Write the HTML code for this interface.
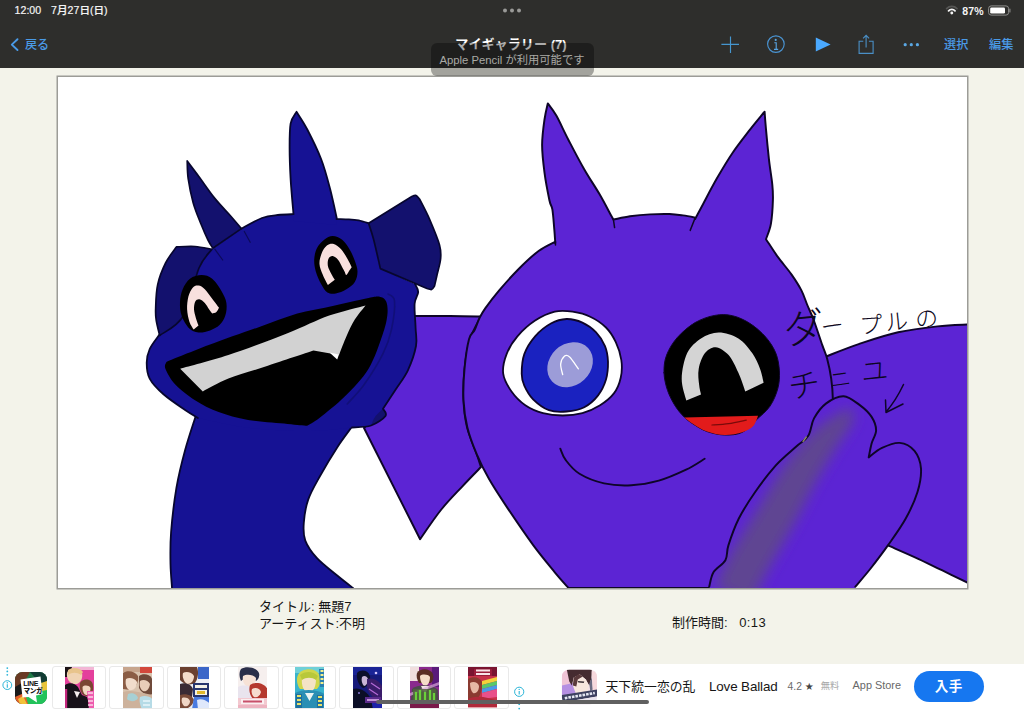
<!DOCTYPE html>
<html lang="ja">
<head>
<meta charset="utf-8">
<title>マイギャラリー</title>
<style>
*{box-sizing:border-box;margin:0;padding:0}
html,body{width:1024px;height:711px;overflow:hidden}
body{position:relative;background:#f3f3ea;font-family:"Liberation Sans","Noto Sans CJK JP",sans-serif;color:#111}
.abs{position:absolute}
#topbar{left:0;top:0;width:1024px;height:68px;background:#2e2e2c}
#status-l{left:14.6px;top:2.9px;font-size:10.6px;line-height:14px;color:#f4f4f4;white-space:nowrap;-webkit-text-stroke:.18px #f4f4f4}
#status-l span{margin-left:10px;font-weight:500}
#dots{left:502px;top:7.7px;width:20px;height:5px}
#pct{left:962.2px;top:3.9px;font-size:10.5px;line-height:14px;color:#f4f4f4;font-weight:bold;letter-spacing:.25px}
#back{left:25px;top:36.6px;font-size:12.1px;line-height:16px;color:#4a9ae6;font-weight:500}
#title{left:411px;top:37.3px;width:200px;text-align:center;font-size:13.1px;line-height:16px;color:#fff;font-weight:bold;white-space:nowrap}
#toast{left:430.5px;top:43px;width:163px;height:32.5px;border-radius:6px;background:rgba(0,0,0,.33);color:#a9a9a5;font-size:11.3px;line-height:14px;padding-top:9.5px;text-align:center;white-space:nowrap}
.navtxt{top:37.3px;font-size:12.2px;line-height:16px;color:#4a9ae6;white-space:nowrap;font-weight:500}
#canvas{left:57.7px;top:77.1px;width:909.3px;height:511.2px;background:#fff;box-shadow:0 0 0 1.5px #9c9c97;overflow:hidden}
.meta{font-size:13px;line-height:16.5px;color:#161616;white-space:nowrap}
#adbar{left:0;top:663.5px;width:1024px;height:48px;background:#fff}
.card{top:2.6px;width:54.5px;height:43.2px;border:1px solid #e9e9e9;border-radius:3px;background:#fff;overflow:hidden}
.card svg{position:absolute;left:12.3px;top:-.6px}
#homebar{left:376px;top:700px;width:272.5px;height:4.4px;border-radius:2.2px;background:#606060}
</style>
</head>
<body>
<div id="topbar" class="abs"></div>
<div id="status-l" class="abs">12:00<span>7月27日(日)</span></div>
<svg id="dots" class="abs" viewBox="0 0 20 5"><circle cx="3" cy="2.5" r="2" fill="#9a9a98"/><circle cx="10" cy="2.5" r="2" fill="#9a9a98"/><circle cx="17" cy="2.5" r="2" fill="#9a9a98"/></svg>

<svg class="abs" style="left:0;top:0" width="1024" height="68" viewBox="0 0 1024 68" fill="none">
<!-- back chevron -->
<path d="M17.5,39.2 L11.8,44.6 L17.5,50" stroke="#4a9ae6" stroke-width="1.9" stroke-linecap="round" stroke-linejoin="round"/>
<!-- plus -->
<path d="M721.4,44.3 H739 M730.5,36.4 V53.1" stroke="#4596cf" stroke-width="1.15"/>
<!-- info -->
<circle cx="775.9" cy="44.1" r="8.3" stroke="#4a94d2" stroke-width="1.15"/>
<circle cx="775.7" cy="39.9" r="1.05" fill="#58a6e6"/>
<path d="M774.3,42.7 H776.2 V49.2 M774,49.4 H778.2" stroke="#58a6e6" stroke-width="1.1"/>
<!-- play -->
<path d="M815.8,37.6 L830.6,44.5 L815.8,51.5 Z" fill="#4aa9ff"/>
<!-- share -->
<path d="M863.3,41.3 H859.1 V53.4 H873.1 V41.3 H868.9" stroke="#4a8fc6" stroke-width="1.1"/>
<path d="M866.1,47.6 V35.4 M863.1,38.4 L866.1,35.3 L869.1,38.4" stroke="#4a8fc6" stroke-width="1.1"/>
<!-- more dots -->
<circle cx="905.2" cy="44.7" r="1.6" fill="#5aa8e4"/><circle cx="911.3" cy="44.7" r="1.6" fill="#5aa8e4"/><circle cx="917.4" cy="44.7" r="1.6" fill="#5aa8e4"/>
<!-- wifi -->
<path d="M946.6,8.6 A7.2,7.2 0 0 1 957,8.6" stroke="#565654" stroke-width="1.7" stroke-linecap="round"/>
<path d="M948.6,10.8 A4.4,4.4 0 0 1 955,10.8" stroke="#f4f4f4" stroke-width="1.9" stroke-linecap="round"/>
<circle cx="951.8" cy="13" r="1.45" fill="#f4f4f4"/>
<!-- battery -->
<rect x="988.6" y="5.9" width="20" height="9.2" rx="2.6" stroke="#8e8e8c" stroke-width="1"/>
<rect x="990.2" y="7.4" width="14.8" height="6.2" rx="1.3" fill="#fff"/>
<path d="M1009.9,9 V12" stroke="#8e8e8c" stroke-width="1.1" stroke-linecap="round"/>
</svg>
<div id="pct" class="abs">87%</div>
<div id="back" class="abs">戻る</div>
<div id="title" class="abs">マイギャラリー (7)</div>
<div class="abs navtxt" style="left:944px">選択</div>
<div class="abs navtxt" style="left:989px">編集</div>

<div id="canvas" class="abs">
<svg id="art" viewBox="57 77 910 511" width="910" height="511" style="position:absolute;left:-.7px;top:-.1px">
<defs><filter id="blur" x="-40%" y="-40%" width="180%" height="180%"><feGaussianBlur stdDeviation="6.5"/></filter>
<clipPath id="armclip"><path d="M709.2,586.7 C709.9,584.3 710.9,576.4 713.6,572.0 C716.3,567.5 723.0,564.6 725.4,560.2 C727.9,555.7 726.2,552.3 728.4,545.4 C730.6,538.5 734.3,527.7 738.7,518.8 C743.2,509.9 748.8,501.1 755.0,492.2 C761.1,483.4 768.8,473.3 775.6,465.6 C782.5,458.0 790.9,451.4 796.3,446.5 C801.7,441.5 805.2,440.8 808.1,436.1 C811.1,431.4 811.1,423.8 814.0,418.4 C817.0,413.0 820.9,407.3 825.9,403.6 C830.8,399.9 837.9,396.0 843.6,396.2 C849.2,396.5 855.1,401.7 859.8,405.1 C864.5,408.5 868.9,412.7 871.6,416.9 C874.3,421.1 876.1,425.8 876.1,430.2 C876.1,434.6 872.9,439.0 871.6,443.5 C870.4,448.0 869.2,455.1 868.7,457.4 C870.9,455.8 876.8,450.3 882.0,447.9 C887.1,445.5 894.3,442.4 899.7,442.9 C905.1,443.4 910.9,446.6 914.5,450.9 C918.0,455.2 920.5,461.7 921.0,468.6 C921.4,475.5 920.0,483.9 917.4,492.2 C914.8,500.6 910.5,509.9 905.6,518.8 C900.7,527.7 893.8,537.0 887.9,545.4 C882.0,553.8 875.6,562.1 870.2,569.0 C864.7,575.9 857.8,583.8 855.4,586.7 L855.0,590.0 L709.0,590.0 Z"/></clipPath></defs>
<g stroke="#0e0528" stroke-width="1.95" stroke-linejoin="round" stroke-linecap="round" fill="none">
<path d="M400.0,316.0 C408.3,316.0 436.5,315.9 450.0,316.0 C463.5,316.1 475.8,316.4 481.0,316.5 C479.2,320.2 472.8,330.2 470.0,339.0 C467.2,347.8 465.6,358.8 464.5,369.0 C463.4,379.2 463.1,390.3 463.5,400.0 C463.9,409.7 464.8,417.8 467.0,427.0 C469.2,436.2 474.7,448.3 477.0,455.0 C479.3,461.7 480.3,465.0 481.0,467.0 C477.9,470.2 469.0,479.2 462.4,486.3 C455.8,493.4 448.4,500.7 441.3,509.5 C434.2,518.3 423.6,534.2 420.1,539.2 L364.0,428.0 L370.0,421.0 C371.3,417.5 374.3,408.5 378.0,400.0 C381.7,391.5 388.3,384.0 392.0,370.0 C395.7,356.0 398.7,325.0 400.0,316.0 Z" fill="#5c24d4"/>
<path d="M800.0,400.0 L826.0,356.5 C831.5,354.4 846.7,348.1 858.7,344.1 C870.7,340.1 885.0,335.2 898.1,332.3 C911.2,329.4 925.9,327.7 937.5,326.4 C949.1,325.1 962.9,324.8 968.0,324.5 L968.0,582.8 C963.6,580.7 950.7,574.5 941.9,570.2 C933.1,566.0 924.0,561.4 915.0,557.3 C906.0,553.2 892.5,547.4 888.0,545.4 L800.0,560.0 Z" fill="#5c24d4"/>
<path d="M555.3,243.0 C555.1,240.7 554.8,235.0 554.3,229.4 C553.8,223.8 553.2,214.6 552.4,209.7 C551.6,204.8 550.7,206.4 549.4,200.2 C548.1,194.0 545.7,181.9 544.5,172.7 C543.3,163.5 542.1,154.0 542.1,145.1 C542.1,136.2 543.5,126.5 544.5,119.5 C545.5,112.5 547.2,106.1 547.8,103.4 C549.2,105.4 552.9,109.6 556.3,115.6 C559.7,121.6 563.5,130.3 568.1,139.2 C572.7,148.0 578.6,159.5 583.9,168.7 C589.1,177.9 595.0,186.4 599.6,194.3 C604.2,202.2 609.1,211.8 611.4,216.0 C613.7,220.2 613.1,218.9 613.4,219.5 C616.2,219.0 623.9,217.2 630.0,216.3 C636.1,215.5 643.4,214.8 650.0,214.4 C656.6,214.0 664.0,213.8 669.5,214.0 C675.0,214.2 678.7,214.8 683.0,215.4 C687.3,216.0 693.1,217.2 695.1,217.6 L695.1,219.0 C696.4,216.5 699.4,210.9 703.0,204.2 C706.6,197.5 711.9,187.1 716.8,178.6 C721.7,170.1 726.9,161.2 732.5,153.0 C738.1,144.8 744.9,136.3 750.2,129.4 C755.6,122.5 762.2,114.7 764.6,111.7 C764.8,114.7 765.3,121.5 766.0,129.4 C766.7,137.3 767.9,149.7 768.9,158.9 C769.9,168.1 771.6,177.6 772.3,184.5 C773.0,191.4 773.1,193.6 772.9,200.2 C772.7,206.8 772.0,217.4 770.9,223.9 C769.8,230.4 766.8,236.6 766.0,239.2 C768.0,242.1 773.5,251.0 777.8,256.9 C782.1,262.8 787.7,269.0 791.6,274.6 C795.5,280.2 798.8,285.3 801.4,290.4 C804.0,295.5 805.3,300.1 807.3,305.0 C809.3,309.9 811.0,312.8 813.5,319.5 C816.0,326.2 820.0,338.5 822.3,345.1 C824.6,351.7 825.7,353.3 827.2,358.9 C828.7,364.5 830.3,372.0 831.2,378.6 C832.1,385.2 832.7,389.7 832.8,398.3 C832.9,406.9 832.1,424.7 832.0,430.0 L832.0,588.0 L568.5,588.0 C566.2,585.4 560.7,579.5 554.8,572.3 C548.9,565.1 540.7,555.4 533.0,544.9 C525.3,534.4 515.7,520.3 508.4,509.4 C501.1,498.5 494.4,488.4 489.2,479.3 C483.9,470.2 480.5,463.4 476.9,454.7 C473.2,446.0 469.5,436.4 467.3,427.3 C465.1,418.2 464.0,409.7 463.5,400.0 C463.0,390.3 463.6,379.1 464.5,369.0 C465.4,358.9 467.3,345.7 469.0,339.2 C470.7,332.7 472.9,333.5 474.6,330.0 C476.4,326.5 477.7,321.6 479.5,318.0 C481.3,314.4 482.1,312.7 485.4,308.1 C488.7,303.5 493.6,297.0 499.2,290.4 C504.8,283.8 512.3,275.3 518.9,268.7 C525.5,262.1 532.5,255.5 538.6,251.0 C544.7,246.5 552.5,243.2 555.3,241.6 Z" fill="#5c24d4"/>
<path d="M613.4,219.5 L614.6,227.6" fill="none" stroke-width="1.5"/>
<path d="M695.1,218 L690.2,230.4" fill="none" stroke-width="1.5"/>
<path d="M555.3,241.6 L555.5,245" fill="none" stroke-width="1.5"/>
<path d="M195.4,417.0 C193.7,422.5 188.4,438.0 185.2,449.8 C182.0,461.6 178.8,474.2 176.4,487.9 C174.1,501.6 172.1,519.1 171.1,531.8 C170.1,544.5 170.3,554.6 170.5,564.0 C170.7,573.4 171.8,584.0 172.0,588.0 L353.0,588.0 C350.4,586.0 343.5,580.8 337.5,575.8 C331.5,570.8 322.4,564.1 317.0,558.2 C311.6,552.3 307.5,546.5 305.3,540.6 C303.1,534.7 303.3,529.8 303.8,523.0 C304.3,516.2 305.5,507.4 308.2,499.6 C310.9,491.8 315.0,485.0 319.9,476.2 C324.8,467.4 332.1,455.2 337.5,446.9 C342.9,438.6 349.8,429.8 352.2,426.4 L380.0,400.0 Z" fill="#161294" stroke="none"/>
<path d="M195.4,417.0 C193.7,422.5 188.4,438.0 185.2,449.8 C182.0,461.6 178.8,474.2 176.4,487.9 C174.1,501.6 172.1,519.1 171.1,531.8 C170.1,544.5 170.3,554.6 170.5,564.0 C170.7,573.4 171.8,584.0 172.0,588.0 " fill="none" stroke-width="1.8" stroke="#07062e"/>
<path d="M353.0,588.0 C350.4,586.0 343.5,580.8 337.5,575.8 C331.5,570.8 322.4,564.1 317.0,558.2 C311.6,552.3 307.5,546.5 305.3,540.6 C303.1,534.7 303.3,529.8 303.8,523.0 C304.3,516.2 305.5,507.4 308.2,499.6 C310.9,491.8 315.0,485.0 319.9,476.2 C324.8,467.4 332.1,455.2 337.5,446.9 C342.9,438.6 349.8,429.8 352.2,426.4 " fill="none" stroke-width="1.8" stroke="#07062e"/>
<path d="M241.4,228.6 C244.8,226.8 255.9,220.3 262.0,218.0 C268.1,215.7 272.6,215.6 277.8,215.0 C283.1,214.4 290.9,214.3 293.5,214.2 L336.5,219.0 C338.6,219.1 345.2,219.2 348.9,219.4 C352.6,219.6 355.4,219.8 358.7,220.4 C362.0,221.1 367.0,222.8 368.6,223.3 C369.4,225.9 371.5,231.4 373.5,239.0 C375.5,246.6 379.2,263.7 380.4,268.6 L415.0,284.0 C415.5,285.3 418.3,288.7 418.2,292.0 C418.1,295.3 415.0,298.0 414.6,304.0 C414.2,310.0 415.4,321.0 415.6,328.0 C415.8,335.0 417.3,339.0 416.0,346.0 C414.7,353.0 411.3,362.8 408.0,370.0 C404.7,377.2 400.2,382.5 396.0,389.0 C391.8,395.5 385.2,405.5 383.0,408.8 C383.4,410.0 387.5,413.2 385.5,416.0 C383.5,418.8 376.7,423.6 371.1,425.5 C365.5,427.4 355.2,427.2 352.0,427.5 C345.0,428.1 327.0,430.9 310.0,431.0 C293.0,431.1 268.7,430.2 250.0,428.0 C231.3,425.8 206.6,419.7 197.9,418.0 C195.8,416.7 190.8,413.9 185.1,410.0 C179.4,406.1 169.4,399.5 163.5,394.3 C157.6,389.1 152.5,383.9 149.7,378.6 C146.9,373.4 146.7,367.7 146.7,362.8 C146.7,357.9 147.6,353.7 149.7,349.0 C151.8,344.3 157.9,336.9 159.5,334.5 C163.5,331.4 176.7,327.1 183.3,316.0 C189.9,304.9 194.2,279.1 199.0,268.0 C203.8,256.9 209.8,252.3 211.9,249.2 L241.4,228.6 Z" fill="#161294" stroke="none"/>
<path d="M293.5,214.2 C293.0,208.3 291.2,189.5 290.6,178.7 C290.0,167.9 289.6,158.4 289.6,149.2 C289.6,140.0 289.5,129.8 290.6,123.6 C291.8,117.4 295.5,113.8 296.5,111.8 C298.3,114.8 303.2,121.6 307.3,129.5 C311.4,137.4 317.3,149.2 321.1,159.0 C324.9,168.8 327.4,178.6 330.0,188.6 C332.6,198.6 335.8,213.9 336.9,219.0 L336.0,225.0 L294.0,221.0 Z" fill="#161294" stroke="none"/>
<path d="M383.0,408.8 C383.4,410.0 387.5,413.2 385.5,416.0 C383.5,418.8 373.5,423.9 371.1,425.5 C371.8,424.1 373.0,419.8 375.0,417.0 C377.0,414.2 381.7,410.2 383.0,408.8 Z" fill="#13116e" stroke="none"/>
<path d="M176.4,246.9 C179.5,246.8 189.1,246.1 195.0,246.5 C200.9,246.9 209.1,248.8 211.9,249.2 C209.8,252.3 203.8,256.9 199.0,268.0 C194.2,279.1 189.9,304.8 183.3,316.0 C176.8,327.2 163.6,332.2 159.7,335.5 C159.1,332.9 156.9,324.6 156.2,320.0 C155.5,315.4 155.4,313.9 155.7,308.0 C155.9,302.1 156.0,292.1 157.7,284.6 C159.3,277.1 162.5,269.3 165.6,263.0 C168.7,256.7 174.6,249.6 176.4,246.9 Z" fill="#13116e" stroke-width="1.7" stroke="#07062e"/>
<path d="M368.6,223.3 L411.0,197.0 C411.8,196.7 414.4,195.1 415.8,195.4 C417.2,195.7 418.9,198.4 419.5,199.0 C421.2,202.4 426.3,211.7 429.6,219.4 C432.9,227.1 437.7,238.4 439.5,245.0 C441.3,251.6 441.0,253.7 440.6,258.7 C440.2,263.7 438.0,270.4 437.0,275.0 C436.0,279.6 434.9,284.2 434.5,286.0 C434.0,286.6 432.9,289.1 431.6,289.5 C430.4,289.9 427.8,288.7 427.0,288.5 L380.4,268.6 C379.2,263.7 375.5,246.6 373.5,239.0 C371.5,231.4 369.4,225.9 368.6,223.3 Z" fill="#13116e" stroke-width="1.7" stroke="#07062e"/>
<path d="M187.2,161.0 C187.4,163.9 187.2,171.8 188.2,178.7 C189.2,185.6 191.0,194.8 193.1,202.4 C195.2,210.0 198.5,217.7 201.0,224.0 C203.5,230.3 206.0,236.0 208.0,240.0 C210.0,244.0 212.0,246.8 212.8,248.2 L241.4,228.6 C239.6,226.5 235.0,221.0 230.6,216.0 C226.2,211.0 220.1,204.9 214.8,198.4 C209.5,191.9 203.6,183.0 199.0,176.8 C194.4,170.6 189.2,163.6 187.2,161.0 Z" fill="#13116e" stroke-width="1.7" stroke="#07062e"/>
<path d="M244.3,231.5 L250.2,242.3" fill="none" stroke-width="1.2" stroke="#0c0a58"/>
<path d="M214.8,249.2 L222.7,260" fill="none" stroke-width="1.2" stroke="#0c0a58"/>
<path d="M241.4,228.6 C244.8,226.8 255.9,220.3 262.0,218.0 C268.1,215.7 272.6,215.6 277.8,215.0 C283.1,214.4 290.9,214.3 293.5,214.2 C293.0,208.3 291.2,189.5 290.6,178.7 C290.0,167.9 289.6,158.4 289.6,149.2 C289.6,140.0 289.5,129.8 290.6,123.6 C291.8,117.4 295.5,113.8 296.5,111.8 C298.3,114.8 303.2,121.6 307.3,129.5 C311.4,137.4 317.3,149.2 321.1,159.0 C324.9,168.8 327.4,178.6 330.0,188.6 C332.6,198.6 335.8,213.9 336.9,219.0 L336.5,219.0 C338.6,219.1 345.2,219.2 348.9,219.4 C352.6,219.6 355.4,219.8 358.7,220.4 C362.0,221.1 367.0,222.8 368.6,223.3 " fill="none" stroke-width="1.8" stroke="#07062e"/>
<path d="M415.0,284.0 C415.5,285.3 418.3,288.7 418.2,292.0 C418.1,295.3 415.0,298.0 414.6,304.0 C414.2,310.0 415.4,321.0 415.6,328.0 C415.8,335.0 417.3,339.0 416.0,346.0 C414.7,353.0 411.3,362.8 408.0,370.0 C404.7,377.2 400.2,382.5 396.0,389.0 C391.8,395.5 385.2,405.5 383.0,408.8 C383.4,410.0 387.5,413.2 385.5,416.0 C383.5,418.8 376.7,423.6 371.1,425.5 C365.5,427.4 355.2,427.2 352.0,427.5 " fill="none" stroke-width="1.8" stroke="#07062e"/>
<path d="M197.9,418.0 C195.8,416.7 190.8,413.9 185.1,410.0 C179.4,406.1 169.4,399.5 163.5,394.3 C157.6,389.1 152.5,383.9 149.7,378.6 C146.9,373.4 146.7,367.7 146.7,362.8 C146.7,357.9 147.6,353.7 149.7,349.0 C151.8,344.3 157.9,336.9 159.5,334.5 " fill="none" stroke-width="1.8" stroke="#07062e"/>
<path d="M388.0,294.0 C389.1,295.2 393.9,295.0 394.5,301.0 C395.1,307.0 393.3,321.0 391.4,329.8 C389.5,338.6 387.6,344.5 383.0,353.7 C378.4,362.9 370.0,376.4 364.0,384.8 C358.0,393.2 350.0,400.8 347.2,404.0 " fill="none" stroke-width="1.6" stroke="#110f78"/>
<path d="M166.4,361.9 C173.4,359.1 193.4,350.9 208.7,345.1 C224.0,339.4 243.2,332.6 258.0,327.4 C272.8,322.1 285.4,317.1 297.3,313.6 C309.2,310.2 317.3,309.3 329.2,306.7 C341.1,304.1 360.1,299.5 368.6,297.9 C377.1,296.3 377.4,296.2 380.4,296.9 C383.3,297.5 385.1,298.7 386.3,301.8 C387.5,304.9 388.0,310.0 387.3,315.6 C386.6,321.2 385.5,326.5 382.4,335.3 C379.3,344.1 374.8,358.5 368.6,368.7 C362.4,378.9 353.2,388.1 345.0,396.3 C336.8,404.5 325.7,413.1 319.4,418.0 C313.1,422.9 309.2,424.5 307.2,425.8 C303.9,425.5 297.4,424.9 287.5,423.9 C277.6,422.9 259.6,421.9 248.1,419.9 C236.6,417.9 227.4,415.3 218.6,412.0 C209.8,408.7 202.2,404.8 195.0,400.2 C187.8,395.6 180.2,389.8 175.3,384.5 C170.4,379.2 166.9,372.5 165.4,368.7 C163.9,364.9 166.2,363.0 166.4,361.9 Z" fill="#000" stroke="none"/>
<path d="M180.2,368.7 C188.2,366.4 210.5,360.9 228.4,355.0 C246.3,349.1 270.7,339.9 287.5,333.3 C304.3,326.7 316.2,320.2 329.2,315.6 C342.2,311.0 359.5,307.1 365.6,305.4 C363.8,307.8 357.9,314.5 354.8,319.5 C351.7,324.5 349.5,329.4 346.9,335.3 C344.3,341.2 340.3,351.7 339.0,355.0 L313.5,350.6 C305.9,353.1 282.0,361.1 267.8,365.8 C253.6,370.5 239.2,374.3 228.4,378.6 C217.6,382.9 207.1,389.3 202.8,391.4 L180.2,368.7 Z" fill="#d2d2d2" stroke="none"/>
<path d="M329.5,352.5 L339,354.5 L337.2,359.5 Z" fill="#fff" stroke="none"/>
<path d="M201.6,275.0 C205.3,275.0 208.8,276.0 212.2,278.7 C215.5,281.4 219.3,287.3 221.7,291.4 C224.0,295.4 225.8,298.9 226.4,303.0 C227.0,307.0 226.5,311.9 225.3,315.6 C224.2,319.3 222.1,322.6 219.5,325.1 C217.0,327.5 213.6,329.1 210.1,330.4 C206.5,331.6 202.0,332.8 198.5,332.5 C194.9,332.1 191.8,331.1 189.0,328.3 C186.2,325.4 183.1,320.0 181.6,315.6 C180.1,311.2 179.8,306.3 180.0,301.9 C180.2,297.5 181.0,293.1 182.7,289.2 C184.3,285.4 186.9,281.1 190.0,278.7 C193.2,276.3 197.9,275.0 201.6,275.0 Z" fill="#000" stroke="none"/>
<path d="M193.7,329.5 C193.0,328.3 190.6,325.3 189.5,321.9 C188.4,318.6 187.3,313.5 187.1,309.3 C186.9,305.1 187.5,300.2 188.4,296.6 C189.4,293.0 191.0,289.5 192.7,287.7 C194.3,285.8 196.4,285.3 198.5,285.6 C200.5,285.8 202.5,287.1 204.8,289.2 C207.1,291.4 209.8,295.7 212.2,298.7 C214.5,301.8 217.9,306.2 219.0,307.7 C218.6,308.4 217.5,310.9 216.4,311.9 C215.2,312.9 212.9,313.2 212.2,313.5 C211.6,312.8 210.2,311.0 209.0,309.3 C207.8,307.5 206.4,304.6 204.8,303.0 C203.2,301.3 201.1,299.5 199.5,299.3 C197.9,299.0 196.2,299.7 195.3,301.4 C194.4,303.0 193.9,306.6 194.0,309.3 C194.1,312.0 195.1,315.0 195.8,317.7 C196.6,320.4 198.0,324.3 198.5,325.6 Z" fill="#f8e0de" stroke="none"/>
<path d="M332.7,236.1 C335.7,236.1 339.4,237.6 342.2,239.8 C345.0,242.0 347.4,245.7 349.5,249.2 C351.7,252.8 353.5,257.2 354.8,260.8 C356.1,264.5 357.5,267.9 357.5,271.4 C357.5,274.9 356.7,278.9 354.8,281.9 C353.0,284.9 349.5,287.4 346.4,289.3 C343.2,291.2 339.0,293.0 335.8,293.5 C332.7,294.0 329.9,294.0 327.4,292.5 C324.9,290.9 323.0,287.5 321.1,284.0 C319.2,280.5 317.0,275.4 315.8,271.4 C314.7,267.3 314.1,263.7 314.2,259.8 C314.4,255.9 315.2,251.5 316.9,248.2 C318.5,244.9 321.6,241.8 324.2,239.8 C326.9,237.7 329.7,236.1 332.7,236.1 Z" fill="#000" stroke="none"/>
<path d="M327.9,285.1 C327.1,283.3 324.1,278.1 322.7,274.5 C321.3,271.0 319.7,267.5 319.5,264.0 C319.3,260.5 320.4,256.5 321.6,253.5 C322.8,250.4 324.9,247.1 326.9,245.6 C328.9,244.0 331.4,243.4 333.7,244.0 C336.1,244.6 338.8,246.8 341.1,249.2 C343.4,251.7 345.7,255.7 347.4,258.7 C349.2,261.7 351.0,265.8 351.7,267.2 C351.3,267.7 350.4,269.0 349.5,270.3 C348.7,271.6 347.2,274.8 346.4,275.1 C345.6,275.3 345.1,272.4 344.8,271.9 C344.4,271.1 343.3,269.2 342.2,267.2 C341.0,265.1 339.5,261.6 338.0,259.8 C336.4,257.9 334.3,256.3 332.7,256.1 C331.1,255.9 329.3,257.1 328.5,258.7 C327.7,260.4 327.5,263.7 327.9,266.1 C328.4,268.6 330.0,271.2 331.1,273.5 C332.2,275.8 334.2,278.8 334.8,279.8 Z" fill="#f8e0de" stroke="none"/>
<path d="M503.2,373.7 C502.4,367.5 504.2,360.3 506.6,354.1 C508.9,347.8 512.6,341.9 517.4,336.3 C522.2,330.8 528.9,324.7 535.1,320.6 C541.4,316.5 548.6,313.2 554.8,311.7 C561.0,310.3 566.6,310.9 572.5,311.7 C578.4,312.6 584.7,314.0 590.2,316.7 C595.8,319.3 601.7,323.2 606.0,327.5 C610.2,331.7 613.3,336.8 615.8,342.2 C618.4,347.7 620.5,354.1 621.3,360.0 C622.2,365.9 622.0,372.1 620.7,377.7 C619.5,383.3 617.3,388.8 613.9,393.4 C610.4,398.0 605.3,402.0 600.1,405.2 C594.8,408.5 588.6,411.4 582.4,413.1 C576.1,414.8 569.2,415.5 562.7,415.5 C556.1,415.5 549.2,414.8 543.0,413.1 C536.8,411.4 530.5,408.8 525.3,405.2 C520.0,401.6 515.2,396.7 511.5,391.5 C507.8,386.2 504.0,380.0 503.2,373.7 Z" fill="#fff" stroke-width="1.8"/>
<path d="M521.7,373.7 C521.7,368.5 522.1,360.3 524.3,354.1 C526.5,347.8 530.7,341.4 535.1,336.3 C539.5,331.3 545.6,326.4 550.9,323.5 C556.1,320.7 561.4,319.2 566.6,319.0 C571.9,318.9 577.4,320.3 582.4,322.6 C587.3,324.8 592.4,328.5 596.1,332.4 C599.9,336.3 603.0,341.3 605.0,346.2 C607.0,351.1 607.8,356.4 608.0,361.9 C608.1,367.5 607.6,374.1 606.0,379.6 C604.3,385.2 601.7,390.8 598.1,395.4 C594.5,400.0 589.6,404.5 584.3,407.2 C579.1,409.9 572.5,411.0 566.6,411.5 C560.7,412.0 554.5,412.2 548.9,410.2 C543.3,408.1 537.3,403.4 533.1,399.3 C529.0,395.2 526.2,389.8 524.3,385.6 C522.4,381.3 521.7,379.0 521.7,373.7 Z" fill="#1a22c0" stroke-width="1.8"/>
<ellipse cx="570.3" cy="364.6" rx="24.6" ry="20.6" transform="rotate(-43 570.3 364.9)" fill="#9c9cd8" stroke="none"/>
<path d="M562.7,374.7 C562.3,372.9 560.4,367.0 560.7,363.9 C561.0,360.8 563.2,357.2 564.6,356.0 C566.1,354.9 567.3,354.9 569.6,357.0 C571.9,359.1 576.9,366.9 578.4,368.8 " fill="none" stroke-width="1.3" stroke="#fff"/>
<path d="M664.0,372.8 C663.9,366.9 664.3,361.0 666.6,355.1 C668.8,349.2 672.6,342.8 677.4,337.4 C682.2,332.0 688.9,326.3 695.1,322.6 C701.4,319.0 708.6,316.5 714.8,315.4 C721.0,314.2 726.6,314.4 732.5,315.7 C738.4,317.1 744.7,320.0 750.2,323.6 C755.8,327.2 761.7,332.5 766.0,337.4 C770.2,342.3 773.6,347.6 775.8,353.1 C778.1,358.7 779.0,365.0 779.4,370.9 C779.7,376.8 779.4,382.7 777.8,388.6 C776.2,394.5 773.5,401.0 769.9,406.3 C766.3,411.5 760.7,415.7 756.1,420.1 C751.5,424.4 747.6,429.8 742.4,432.3 C737.1,434.8 730.6,435.2 724.6,435.0 C718.7,434.9 712.2,433.3 706.9,431.5 C701.7,429.7 696.9,426.4 693.1,424.0 C689.4,421.6 687.2,420.1 684.3,417.1 C681.3,414.2 678.2,410.7 675.4,406.3 C672.6,401.9 669.5,396.1 667.6,390.6 C665.7,385.0 664.2,378.7 664.0,372.8 Z" fill="#000" stroke-width="1"/>
<path d="M684.3,417.5 L758.1,415.7 C757.3,417.5 755.8,423.2 753.2,426.0 C750.6,428.7 747.1,430.8 742.4,432.3 C737.6,433.8 730.6,435.2 724.6,435.0 C718.7,434.9 712.2,433.3 706.9,431.5 C701.7,429.7 696.9,426.3 693.1,424.0 C689.4,421.7 685.8,418.6 684.3,417.5 Z" fill="#e21b1b" stroke="none"/>
<path d="M711.9,425.0 C714.6,424.8 722.8,424.4 728.6,423.6 C734.3,422.8 743.3,420.7 746.3,420.1 " fill="none" stroke-width="1.2" stroke="#7a0a0a"/>
<path d="M686.3,400.4 C685.5,396.8 681.6,386.6 681.7,378.7 C681.9,370.9 684.0,359.9 687.2,353.1 C690.5,346.4 695.8,341.8 701.0,338.4 C706.3,334.9 712.5,332.5 718.7,332.5 C725.0,332.5 732.8,334.9 738.4,338.4 C744.0,341.8 748.6,348.1 752.2,353.1 C755.8,358.2 758.2,364.0 760.1,368.9 C762.0,373.8 763.0,380.4 763.6,382.7 L745.3,391.5 C744.2,388.4 741.2,378.9 738.4,372.8 C735.6,366.8 732.4,359.4 728.6,355.1 C724.8,350.9 719.7,347.6 715.8,347.2 C711.9,346.9 707.8,349.5 705.0,353.1 C702.1,356.8 699.6,363.6 698.7,368.9 C697.7,374.1 698.7,380.4 699.1,384.6 C699.4,388.9 700.7,392.8 701.0,394.5 Z" fill="#d4d4d4" stroke="none"/>
<path d="M560.3,448.7 C561.2,450.6 562.6,456.0 565.8,460.2 C569.0,464.4 573.1,469.9 579.5,473.8 C585.9,477.7 595.5,481.5 604.1,483.4 C612.8,485.3 622.3,485.8 631.4,485.3 C640.5,484.9 649.7,483.3 658.8,480.7 C667.9,478.1 678.5,473.3 686.1,469.7 C693.8,466.1 701.6,460.6 704.7,458.8 " fill="none" stroke-width="1.9"/>
<path d="M709.2,586.7 C709.9,584.3 710.9,576.4 713.6,572.0 C716.3,567.5 723.0,564.6 725.4,560.2 C727.9,555.7 726.2,552.3 728.4,545.4 C730.6,538.5 734.3,527.7 738.7,518.8 C743.2,509.9 748.8,501.1 755.0,492.2 C761.1,483.4 768.8,473.3 775.6,465.6 C782.5,458.0 790.9,451.4 796.3,446.5 C801.7,441.5 805.2,440.8 808.1,436.1 C811.1,431.4 811.1,423.8 814.0,418.4 C817.0,413.0 820.9,407.3 825.9,403.6 C830.8,399.9 837.9,396.0 843.6,396.2 C849.2,396.5 855.1,401.7 859.8,405.1 C864.5,408.5 868.9,412.7 871.6,416.9 C874.3,421.1 876.1,425.8 876.1,430.2 C876.1,434.6 872.9,439.0 871.6,443.5 C870.4,448.0 869.2,455.1 868.7,457.4 C870.9,455.8 876.8,450.3 882.0,447.9 C887.1,445.5 894.3,442.4 899.7,442.9 C905.1,443.4 910.9,446.6 914.5,450.9 C918.0,455.2 920.5,461.7 921.0,468.6 C921.4,475.5 920.0,483.9 917.4,492.2 C914.8,500.6 910.5,509.9 905.6,518.8 C900.7,527.7 893.8,537.0 887.9,545.4 C882.0,553.8 875.6,562.1 870.2,569.0 C864.7,575.9 857.8,583.8 855.4,586.7 L855.0,590.0 L709.0,590.0 Z" fill="#5c24d4" stroke="none"/>
<g clip-path="url(#armclip)"><path d="M849.3,408.0 C847.8,408.7 845.9,408.6 840.2,412.1 C834.6,415.6 823.3,422.0 815.4,428.9 C807.5,435.8 799.5,445.3 792.9,453.4 C786.4,461.5 781.2,469.6 776.0,477.6 C770.9,485.6 766.9,493.0 761.8,501.4 C756.8,509.7 751.1,519.0 745.7,528.0 C740.3,536.9 734.8,545.1 729.6,555.0 C724.4,564.9 717.0,581.9 714.4,587.3 L751.6,604.7 C754.0,599.5 761.2,583.3 766.0,573.8 C770.8,564.4 775.3,556.9 780.3,548.0 C785.3,539.2 791.1,529.3 795.8,520.6 C800.4,512.0 803.8,504.3 808.0,496.4 C812.1,488.4 816.1,481.0 820.9,472.8 C825.6,464.6 831.4,455.5 836.6,447.1 C841.9,438.8 849.7,428.7 852.4,422.5 C855.0,416.3 852.7,412.1 852.7,410.0 Z" fill="#5e4592" stroke="none" filter="url(#blur)"/></g>
<path d="M709.2,586.7 C709.9,584.3 710.9,576.4 713.6,572.0 C716.3,567.5 723.0,564.6 725.4,560.2 C727.9,555.7 726.2,552.3 728.4,545.4 C730.6,538.5 734.3,527.7 738.7,518.8 C743.2,509.9 748.8,501.1 755.0,492.2 C761.1,483.4 768.8,473.3 775.6,465.6 C782.5,458.0 790.9,451.4 796.3,446.5 C801.7,441.5 805.2,440.8 808.1,436.1 C811.1,431.4 811.1,423.8 814.0,418.4 C817.0,413.0 820.9,407.3 825.9,403.6 C830.8,399.9 837.9,396.0 843.6,396.2 C849.2,396.5 855.1,401.7 859.8,405.1 C864.5,408.5 868.9,412.7 871.6,416.9 C874.3,421.1 876.1,425.8 876.1,430.2 C876.1,434.6 872.9,439.0 871.6,443.5 C870.4,448.0 869.2,455.1 868.7,457.4 C870.9,455.8 876.8,450.3 882.0,447.9 C887.1,445.5 894.3,442.4 899.7,442.9 C905.1,443.4 910.9,446.6 914.5,450.9 C918.0,455.2 920.5,461.7 921.0,468.6 C921.4,475.5 920.0,483.9 917.4,492.2 C914.8,500.6 910.5,509.9 905.6,518.8 C900.7,527.7 893.8,537.0 887.9,545.4 C882.0,553.8 875.6,562.1 870.2,569.0 C864.7,575.9 857.8,583.8 855.4,586.7 "/>
<g stroke="none" fill="#0c0620" font-family="'Liberation Sans','Noto Sans CJK JP',sans-serif" font-weight="300">
<text font-size="23" x="785 822 860 886 916" y="345 336 334 331 328" rotate="-6 -8 -4 -6 -6"><tspan font-size="41">ダ</tspan>ープルの</text>
<text font-size="27" x="790 831 862" y="399 388 382" rotate="-8 -8 -6"><tspan font-size="32">チ</tspan><tspan font-size="21">ニ</tspan>ユ</text>
</g>
<path d="M803,441.5 L806.3,437" stroke="#8c8a5c" stroke-width="1.3"/>
<path d="M903.5,384.5 C899,394 892,405 886,412 M885.5,400 L886,412.5 L903,404" stroke-width="1.5"/>
</g></svg>
</div>

<div id="toast" class="abs">Apple Pencil が利用可能です</div>

<div class="abs meta" style="left:259px;top:599.3px">タイトル: 無題7<br>アーティスト:不明</div>
<div class="abs meta" style="left:672px;top:615.3px">制作時間:<span style="margin-left:11.5px;letter-spacing:.4px">0:13</span></div>

<div id="adbar" class="abs">
<svg class="abs" style="left:0;top:-1px" width="60" height="48" viewBox="0 0 60 48">
<circle cx="7.3" cy="5.1" r=".9" fill="#2bb5d8"/><circle cx="7.3" cy="8.4" r=".9" fill="#2bb5d8"/><circle cx="7.3" cy="11.8" r=".9" fill="#2bb5d8"/>
<circle cx="7.3" cy="22.1" r="4.4" fill="none" stroke="#2bb5d8" stroke-width="1"/>
<circle cx="7.3" cy="19.7" r=".7" fill="#2bb5d8"/><path d="M7.3,21.2 V24.8" stroke="#2bb5d8" stroke-width="1.1"/>
<defs><clipPath id="lc"><rect x="15" y="9" width="32" height="32" rx="7.5"/></clipPath></defs>
<g clip-path="url(#lc)">
<rect x="15" y="9" width="32" height="32" fill="#1f7a46"/>
<path d="M15,9 H30 L24,20 L15,26 Z" fill="#6a3a24"/>
<path d="M30,9 H47 V22 L38,18 Z" fill="#123c34"/>
<path d="M15,24 L22,20 L24,34 L15,41 Z" fill="#1a1a1a"/>
<path d="M15,34 L24,30 L30,41 H15 Z" fill="#e4602a"/>
<path d="M18,36 L23,33 L27,41 H20 Z" fill="#f2c23a"/>
<path d="M26,34 L47,26 V41 H28 Z" fill="#22c25a"/>
<path d="M41,20 L47,18 V27 L42,28 Z" fill="#e8c43a"/>
<path d="M20.5,16.5 L40.5,13.5 L42.5,31 L36,32.5 L37,39.5 L28.5,34 L22.5,34.5 Z" fill="#fff"/>
</g>
</svg>
<div class="abs" style="left:23.2px;top:16.6px;font-size:7px;line-height:7px;font-weight:bold;color:#111;letter-spacing:-.2px;white-space:nowrap">LINE</div>
<div class="abs" style="left:23.4px;top:23.4px;font-size:6.6px;line-height:8px;font-weight:900;color:#111;letter-spacing:-.3px;white-space:nowrap">マンガ</div>
<div class="abs card" style="left:51.75px"><svg width="29.3" height="42.6" viewBox="0 0 29.3 42.6">
<rect width="29.3" height="42.6" fill="#e4409c"/>
<rect x="0" y="0" width="29.3" height="3" fill="#f3b6d6"/>
<path d="M0,0 H7 L5,6 L2,10 L0,10 Z" fill="#1a1216"/>
<path d="M2,6 C3,1 14,0 17,6 C18,11 16,15 12,17 C6,18 1,13 2,6 Z" fill="#f0d4b4"/>
<path d="M3,3 C7,0 15,0 18,5 L16,8 C12,5 7,5 3,8 Z" fill="#e8c48c"/>
<path d="M15,16 C17,11 27,11 28,18 C29,25 26,29 21,29 C16,28 14,22 15,16 Z" fill="#7a4632"/>
<path d="M17.5,20 C19,18 24,18 25.5,21 C25.5,26 23,28 21,28 C18.5,27 17.5,24 17.5,20 Z" fill="#f2d6c0"/>
<path d="M0,18 C4,15 10,16 13,20 L17,28 L22,30 L26,42.6 H0 Z" fill="#18121a"/>
<path d="M9,24 L12,31 L15,25 Z" fill="#f6eef0"/>
<path d="M22,24 H29.3 V42.6 H24 Z" fill="#ee5cae"/>
<path d="M23,26 H28 M23,30 H28 M23,34 H28 M23,38 H28" stroke="#fbd3e8" stroke-width="1.6"/>
<rect x="0" y="22" width="2.2" height="20.6" fill="#c4287e"/>
</svg></div>
<div class="abs card" style="left:109.25px"><svg width="29.3" height="42.6" viewBox="0 0 29.3 42.6">
<rect width="29.3" height="42.6" fill="#d9c3ae"/>
<rect x="0" y="0" width="29.3" height="5" fill="#c7a58d"/>
<rect x="17" y="0" width="12.3" height="6" fill="#d2483c"/>
<path d="M0,6 C4,3 12,4 15,9 C16,15 13,21 8,23 L0,22 Z" fill="#8b5d45"/>
<path d="M16,9 C20,6 27,7 29.3,12 V27 C25,29 19,27 16,21 Z" fill="#6f4a3a"/>
<path d="M3,12 C6,10 12,11 14,15 C14,21 10,24 6,23 C3,21 2,16 3,12 Z" fill="#f1dccb"/>
<path d="M17,14 C20,12 25,13 27,17 C26,23 23,25 20,24 C17,22 16,18 17,14 Z" fill="#e8cdb9"/>
<path d="M0,25 C8,22 20,26 29.3,28 V42.6 H0 Z" fill="#cdb29c"/>
<path d="M5,27 C9,25 14,27 15,31 C13,35 7,35 4,32 Z" fill="#a7d0d4"/>
<path d="M17,30 C21,28 27,29 29.3,32 V42.6 H19 C17,38 16,34 17,30 Z" fill="#b6dbe6"/>
<path d="M20,34 H27 M20,38 H27" stroke="#e9f6fa" stroke-width="1.5"/>
</svg></div>
<div class="abs card" style="left:166.75px"><svg width="29.3" height="42.6" viewBox="0 0 29.3 42.6">
<rect width="29.3" height="42.6" fill="#eef0f6"/>
<rect x="18" y="0" width="11.3" height="12" fill="#3b66c8"/>
<path d="M0,0 H17 C19,5 18,12 15,16 C10,19 3,17 0,13 Z" fill="#6b4030"/>
<path d="M3,6 C6,4 12,5 14,9 C14,14 11,17 7,17 C4,15 2,10 3,6 Z" fill="#f3dccb"/>
<path d="M0,17 C5,15 11,17 13,22 L12,30 H0 Z" fill="#3a2a34"/>
<path d="M13,16 H29.3 V30 H13 Z" fill="#27356e"/>
<path d="M15,18 H27 V21 H15 Z M15,23 H27 V28 H15 Z" fill="#f4f1e6"/>
<path d="M17,24 H25 V27 H17 Z" fill="#e0b72c"/>
<path d="M0,28 C6,26 12,28 14,33 C13,39 8,42.6 0,42.6 Z" fill="#7a4a38"/>
<path d="M2,31 C5,30 9,31 10,34 C10,38 7,40 4,39 C2,37 1,34 2,31 Z" fill="#f0d6c6"/>
<path d="M14,30 H29.3 V42.6 H12 Z" fill="#4a7be0"/>
<path d="M17,33 C21,31 26,33 29.3,36 V42.6 H18 Z" fill="#dfe8fb"/>
</svg></div>
<div class="abs card" style="left:224.25px"><svg width="29.3" height="42.6" viewBox="0 0 29.3 42.6">
<rect width="29.3" height="42.6" fill="#f6efee"/>
<path d="M3,2 C8,-1 18,0 21,6 C22,10 20,13 18,14 C12,10 7,11 3,14 C1,10 1,5 3,2 Z" fill="#2a2f4a"/>
<path d="M5,9 C8,7 15,7 18,11 C18,17 14,20 10,20 C6,18 4,14 5,9 Z" fill="#f7e2d6"/>
<path d="M0,20 C6,17 14,19 17,24 L16,32 H0 Z" fill="#e9e4ee"/>
<path d="M12,18 C17,14 27,16 29.3,22 V36 C24,38 16,35 13,29 C11,25 11,21 12,18 Z" fill="#b5382e"/>
<path d="M14,22 C17,20 22,21 23,25 C22,29 19,31 16,30 C14,28 13,25 14,22 Z" fill="#f6dccf"/>
<path d="M0,31 H29.3 V42.6 H0 Z" fill="#f3c9d0"/>
<path d="M3,32 H26 V37 H3 Z" fill="#fbeff1"/>
<path d="M5,34.5 H24" stroke="#c8506a" stroke-width="2"/>
<path d="M0,38 H29.3 V42.6 H0 Z" fill="#eeb3c0"/>
</svg></div>
<div class="abs card" style="left:281.75px"><svg width="29.3" height="42.6" viewBox="0 0 29.3 42.6">
<rect width="29.3" height="42.6" fill="#39b3cc"/>
<rect x="0" y="0" width="29.3" height="6" fill="#6fd0d8"/>
<path d="M3,8 C6,1 20,0 24,7 C27,13 25,19 22,22 L5,22 C2,18 1,12 3,8 Z" fill="#cfd64a"/>
<path d="M7,11 C10,8 18,8 21,12 C21,20 18,25 14,26 C9,25 6,19 7,11 Z" fill="#f4e3c6"/>
<path d="M5,8 C10,4 18,4 23,9 L21,13 C17,10 11,10 7,13 Z" fill="#b8c83a"/>
<path d="M24,2 H29.3 V20 H25 Z" fill="#2a7fb0"/>
<path d="M25.5,4 H28.5 M25.5,8 H28.5 M25.5,12 H28.5 M25.5,16 H28.5" stroke="#f4f08a" stroke-width="1.8"/>
<path d="M0,26 C8,22 21,22 29.3,27 V42.6 H0 Z" fill="#2a8fb4"/>
<path d="M1,27 H7 V41 H1 Z" fill="#1f6f9e"/>
<path d="M2,29 H6 M2,33 H6 M2,37 H6" stroke="#e8e46a" stroke-width="2"/>
<path d="M22,28 H28 V41 H22 Z" fill="#1f6f9e"/>
<path d="M23,30 H27 M23,34 H27 M23,38 H27" stroke="#e8e46a" stroke-width="2"/>
<path d="M10,26 L14.5,34 L19,26 Z" fill="#eaf4f2"/>
</svg></div>
<div class="abs card" style="left:339.25px"><svg width="29.3" height="42.6" viewBox="0 0 29.3 42.6">
<rect width="29.3" height="42.6" fill="#161a7a"/>
<rect x="0" y="0" width="29.3" height="8" fill="#1a2496"/>
<rect x="0" y="36" width="29.3" height="6.6" fill="#1c22a8"/>
<path d="M4,6 C8,2 15,3 17,9 C18,15 14,20 10,21 C6,19 3,12 4,6 Z" fill="#0c0f2a"/>
<path d="M9,10 C11,8 14,9 15,12 C15,16 13,19 11,19 C9,17 8,13 9,10 Z" fill="#c9b4d6"/>
<path d="M14,12 C20,10 27,14 29.3,20 V34 C22,34 16,28 14,20 Z" fill="#3a1c6a"/>
<path d="M18,16 L27,22 M16,22 L25,28" stroke="#b46ad6" stroke-width="1.2"/>
<path d="M0,22 C6,20 14,24 18,32 L20,42.6 H0 Z" fill="#0b0e26"/>
<path d="M12,30 H28 V36 H12 Z" fill="#5a2a8c"/>
<path d="M14,33 H26" stroke="#e6b8f0" stroke-width="1.6"/>
<circle cx="23" cy="6" r="1.3" fill="#d8c8ff"/><circle cx="6" cy="26" r="1" fill="#8a7ad6"/>
</svg></div>
<div class="abs card" style="left:396.75px"><svg width="29.3" height="42.6" viewBox="0 0 29.3 42.6">
<rect width="29.3" height="42.6" fill="#8a2a8e"/>
<rect x="0" y="0" width="9" height="14" fill="#f0dede"/>
<rect x="22" y="0" width="7.3" height="20" fill="#5a1a7a"/>
<path d="M7,6 C10,1 20,1 23,7 C24,11 23,14 21,16 L9,16 C7,13 6,9 7,6 Z" fill="#5a2e24"/>
<path d="M10,9 C12,7 18,7 20,10 C20,16 17,19 15,19 C12,18 10,14 10,9 Z" fill="#f4dcc8"/>
<path d="M2,22 C8,17 22,17 28,23 L29.3,42.6 H0 Z" fill="#4c4a4c"/>
<path d="M11,19 L15,27 L19,19 Z" fill="#f1e6e6"/>
<path d="M0,26 L29.3,15 V18 L0,29 Z" fill="#d8a8d8" opacity=".7"/>
<path d="M3,22 H26 V36 H3 Z" fill="#50643c" opacity=".85"/><path d="M0,37 H29.3 V42.6 H0 Z" fill="#7a1a4a"/>
<path d="M6,25 V35 M10,23 V35 M15,25 V35 M20,23 V35 M24,26 V35" stroke="#6ad03a" stroke-width="2.2"/>
</svg></div>
<div class="abs card" style="left:454.25px"><svg width="29.3" height="42.6" viewBox="0 0 29.3 42.6">
<rect width="29.3" height="42.6" fill="#c8324a"/>
<rect x="0" y="0" width="29.3" height="9" fill="#7a1430"/>
<path d="M6,2 H24 V9 H6 Z" fill="#9a1c3a"/>
<path d="M8,3.5 H22 M8,7 H22" stroke="#f8e4e8" stroke-width="2"/>
<path d="M0,12 C5,9 12,10 14,15 C15,22 12,30 8,34 L0,34 Z" fill="#8a3a30"/>
<path d="M2,16 C5,14 10,15 11,19 C11,24 8,27 5,26 C3,24 2,20 2,16 Z" fill="#e6b8a4"/>
<path d="M14,14 L29.3,10 V14 L14,18 Z" fill="#f4d23a"/>
<path d="M14,18 L29.3,14 V18 L14,22 Z" fill="#5ac86a"/>
<path d="M14,22 L29.3,18 V22 L14,26 Z" fill="#4a9ae8"/>
<path d="M14,26 L29.3,22 V30 L14,32 Z" fill="#e8508a"/>
<path d="M0,32 C8,28 20,30 29.3,34 V42.6 H0 Z" fill="#b02a3a"/>
<path d="M4,36 H25" stroke="#f4c4c8" stroke-width="2"/>
<path d="M0,40 H29.3 V42.6 H0 Z" fill="#e8a0a8"/>
</svg></div>
<svg class="abs" style="left:510px;top:0" width="100" height="48" viewBox="510 0 100 48">
<circle cx="519.2" cy="27.8" r="4.6" fill="none" stroke="#2bb5d8" stroke-width="1"/>
<circle cx="519.2" cy="25.4" r=".7" fill="#2bb5d8"/><path d="M519.2,26.9 V30.5" stroke="#2bb5d8" stroke-width="1.1"/>
<circle cx="519.2" cy="40.2" r=".9" fill="#2bb5d8"/><circle cx="519.2" cy="44.6" r=".9" fill="#2bb5d8"/>
<defs><clipPath id="ac"><rect x="0" y="0" width="35.2" height="35" rx="7.5"/></clipPath></defs>
<g transform="translate(561.8 5.4)" clip-path="url(#ac)">
<rect width="35.2" height="35" fill="#f5e2e8"/>
<path d="M0,14 L10,13 L16,18 L15,25 L0,29 Z" fill="#b58fe2"/>
<path d="M0,4 L5,0 L9,14 L0,16 Z" fill="#f0c4d6"/>
<path d="M5,0 H30 L29.5,9 L27.5,16 L24,10 L18,5 L12,8 L10,16 L7.5,12 Z" fill="#452b30"/>
<path d="M12,8 L18,5 L24,10 L27,16 L25,22 L20,27 L14,24 L11,16 Z" fill="#f7e6de"/>
<path d="M12,8 L17,4.5 L21,7 L16,10 L14.5,17 L11,16 Z" fill="#5a3a3c"/>
<path d="M16,11.5 L22.5,12 L22,13.6 L16.5,13 Z" fill="#3a3036"/>
<path d="M27.5,14 L30,8 L31,20 L28.5,22 Z" fill="#6a6a80"/>
<path d="M30,2 H35.2 V22 L31,21 Z" fill="#f6d8dc"/>
<path d="M0,25.5 L35.2,20 V27 L0,33 Z" fill="#3d4060"/>
<path d="M3,28.8 L33,23.6" stroke="#e4e6f2" stroke-width="2.6" stroke-dasharray="2.6 1"/>
<path d="M0,33 L35.2,27 V35 H0 Z" fill="#e9e4ee"/>
</g>
</svg>
<div class="abs" style="left:605.5px;top:14.8px;font-size:12.85px;line-height:17px;color:#151515;white-space:nowrap">天下統一恋の乱<span style="margin-left:13.5px;font-size:13.4px;letter-spacing:-.12px">Love Ballad</span></div>
<div class="abs" style="left:787.6px;top:16.6px;font-size:10.3px;line-height:13px;color:#6a6a6a;white-space:nowrap">4.2 <span style="font-family:'DejaVu Sans',sans-serif;font-size:10px;color:#444">★</span></div>
<div class="abs" style="left:820.8px;top:16.9px;font-size:9.3px;line-height:13px;color:#a9a9a9;white-space:nowrap">無料</div>
<div class="abs" style="left:852.6px;top:15.9px;font-size:10.9px;line-height:13px;color:#686868;white-space:nowrap">App Store</div>
<div class="abs" style="left:913.5px;top:7.4px;width:70.6px;height:31.4px;border-radius:16px;background:#1677f0;color:#fff;font-size:13.5px;line-height:31px;font-weight:bold;text-align:center;letter-spacing:.5px">入手</div>
</div>
<div id="homebar" class="abs"></div>
</body>
</html>
